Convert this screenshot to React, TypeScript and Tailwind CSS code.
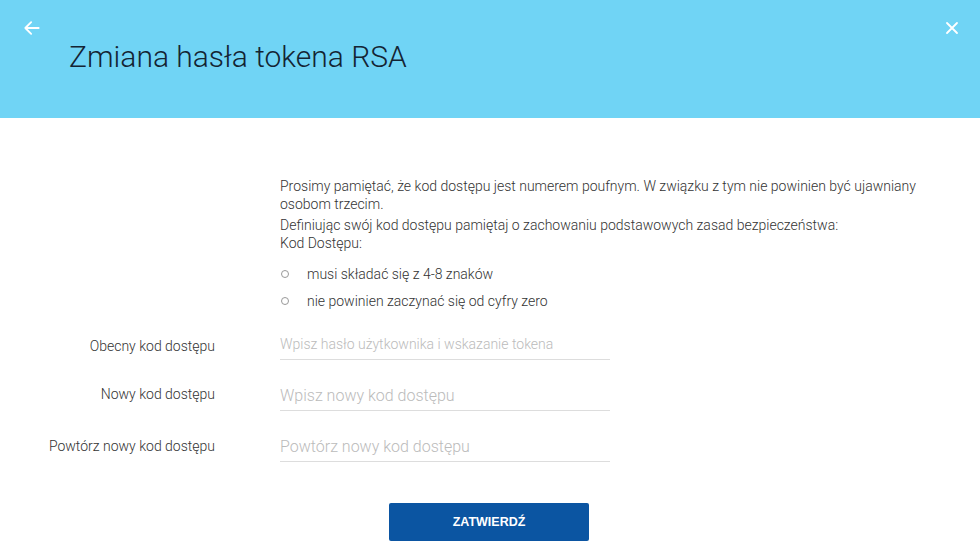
import React from "react";

export default function App() {
  return (
    <div className="w-[980px] h-[560px] bg-white overflow-hidden" style={{ fontFamily: "Roboto, 'Noto Sans', sans-serif" }}>
      <header className="h-[118px] bg-[#70d4f5] relative">
        <div className="flex justify-between pl-[22px] pr-[18px] pt-[18px]">
          <svg width="20" height="20" viewBox="0 0 24 24" fill="none" stroke="white" strokeWidth="2.2" strokeLinecap="round" strokeLinejoin="round">
            <path d="M20 12H4M11 5l-7 7 7 7" />
          </svg>
          <svg width="20" height="20" viewBox="0 0 24 24" fill="none" stroke="white" strokeWidth="2.2" strokeLinecap="round">
            <path d="M6 6l12 12M18 6L6 18" />
          </svg>
        </div>
        <h1 className="pl-[69px] -mt-[1px] text-[30px] font-light text-[#142433] leading-[40px]">Zmiana hasła tokena RSA</h1>
      </header>
      <main className="pt-[59px]">
        <div className="pl-[280px] pr-[50px] text-[14px] font-light leading-[18px] text-[#333]">
          <p className="mb-[3px]">Prosimy pamiętać, że kod dostępu jest numerem poufnym. W związku z tym nie powinien być ujawniany osobom trzecim.</p>
          <p>Definiując swój kod dostępu pamiętaj o zachowaniu podstawowych zasad bezpieczeństwa:</p>
          <p>Kod Dostępu:</p>
          <ul className="mt-[13px] flex flex-col gap-[9px]">
            <li className="flex items-center">
              <span className="w-[8px] h-[8px] rounded-full border border-[#999] ml-[1px] mr-[18px]" />
              musi składać się z 4-8 znaków
            </li>
            <li className="flex items-center">
              <span className="w-[8px] h-[8px] rounded-full border border-[#999] ml-[1px] mr-[18px]" />
              nie powinien zaczynać się od cyfry zero
            </li>
          </ul>
        </div>
        <div className="mt-[19px] flex flex-col gap-[20px]">
          <div className="flex items-end">
            <label className="w-[215px] text-right text-[14px] font-light text-[#333] pb-[3px]">Obecny kod dostępu</label>
            <input className="ml-[65px] w-[330px] h-[31px] border-b border-[#ddd] outline-none text-[14px] font-light placeholder:text-[#bbb]" placeholder="Wpisz hasło użytkownika i wskazanie tokena" />
          </div>
          <div className="flex items-end">
            <label className="w-[215px] text-right text-[14px] font-light text-[#333] pb-[6px]">Nowy kod dostępu</label>
            <input className="ml-[65px] w-[330px] h-[31px] border-b border-[#ddd] outline-none text-[16px] font-light placeholder:text-[#bbb]" placeholder="Wpisz nowy kod dostępu" />
          </div>
          <div className="flex items-end">
            <label className="w-[215px] text-right text-[14px] font-light text-[#333] pb-[5px]">Powtórz nowy kod dostępu</label>
            <input className="ml-[65px] w-[330px] h-[31px] border-b border-[#ddd] outline-none text-[16px] font-light placeholder:text-[#bbb]" placeholder="Powtórz nowy kod dostępu" />
          </div>
        </div>
        <div className="mt-[41px] pl-[389px]">
          <button className="w-[200px] h-[38px] rounded-[2px] bg-[#0b55a2] text-white text-[12.5px] font-bold" style={{ fontFamily: "'Liberation Sans', Arial, sans-serif" }}>ZATWIERDŹ</button>
        </div>
      </main>
    </div>
  );
}
